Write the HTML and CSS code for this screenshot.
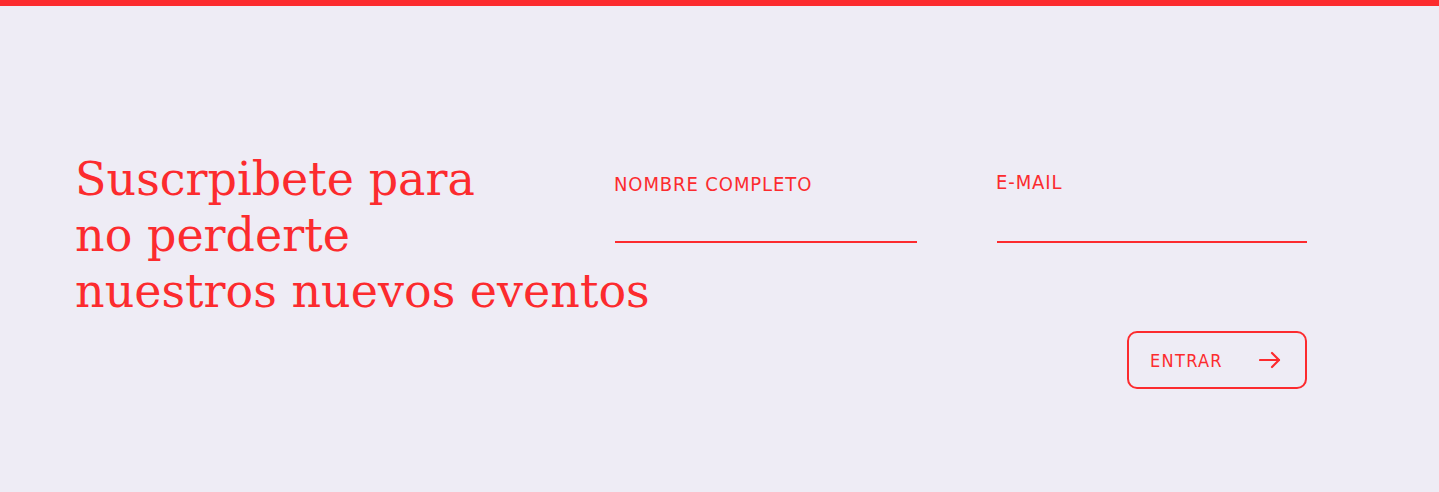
FILE: index.html
```html
<!DOCTYPE html>
<html lang="es">
<head>
<meta charset="utf-8">
<title>Suscripción</title>
<link rel="stylesheet" href="styles.css">
</head>
<body>
<div class="topbar"></div>
<section class="subscribe">
  <h2 class="title">Suscrpibete para<br>no perderte<br>nuestros nuevos eventos</h2>
  <form class="form">
    <div class="fields">
      <label class="field field-name">
        <span class="label">NOMBRE COMPLETO</span>
        <input class="input" type="text">
      </label>
      <label class="field field-email">
        <span class="label">E-MAIL</span>
        <input class="input" type="email">
      </label>
    </div>
    <div class="actions">
      <button class="submit" type="button">
        <span class="submit-text">ENTRAR</span>
        <svg class="arrow" width="22" height="18" viewBox="0 0 22 18" fill="none" stroke="currentColor" stroke-width="2.2" stroke-linecap="round" stroke-linejoin="round"><path d="M1 9H20"/><path d="M13 2L20 9L13 16"/></svg>
      </button>
    </div>
  </form>
</section>
</body>
</html>
```
FILE: styles.css
```css
* { box-sizing: border-box; }
html, body { margin: 0; padding: 0; }
body {
  background: #eeecf5;
  color: #fc2b2e;
  font-family: "DejaVu Sans", sans-serif;
  height: 492px;
  overflow: hidden;
}
.topbar {
  height: 6px;
  background: #fc2b2e;
}
.subscribe {
  display: grid;
  grid-template-columns: 539px 693px;
  padding: 145px 0 0 75px;
}
.title {
  margin: 0;
  font-family: "DejaVu Serif", serif;
  font-weight: normal;
  font-size: 46px;
  line-height: 56px;
  white-space: nowrap;
  color: #fc2b2e;
}
.form {
  display: flex;
  flex-direction: column;
  padding-top: 22px;
}
.fields {
  display: grid;
  grid-template-columns: 303px 311px;
  column-gap: 79px;
}
.field {
  display: flex;
  flex-direction: column;
}
.label {
  font-family: "DejaVu Sans Condensed", "DejaVu Sans", sans-serif;
  font-size: 20px;
  letter-spacing: 0.9px;
  line-height: 22px;
}
.field-email .label { margin-top: -2px; margin-bottom: 2px; }
.input {
  margin-top: 26px;
  margin-left: 1px;
  height: 22px;
  border: none;
  border-bottom: 2px solid #fc2b2e;
  background: transparent;
  outline: none;
  padding: 0;
}
.actions {
  display: flex;
  justify-content: flex-end;
  padding-top: 88px;
}
.submit {
  width: 180px;
  height: 58px;
  border: 2px solid #fc2b2e;
  border-radius: 10px;
  background: transparent;
  color: #fc2b2e;
  display: flex;
  align-items: center;
  justify-content: space-between;
  padding: 0 24px 0 21px;
  cursor: pointer;
}
.submit-text {
  font-family: "DejaVu Sans Condensed", "DejaVu Sans", sans-serif;
  font-size: 18px;
  letter-spacing: 1.3px;
}
.arrow { display: block; }
```
